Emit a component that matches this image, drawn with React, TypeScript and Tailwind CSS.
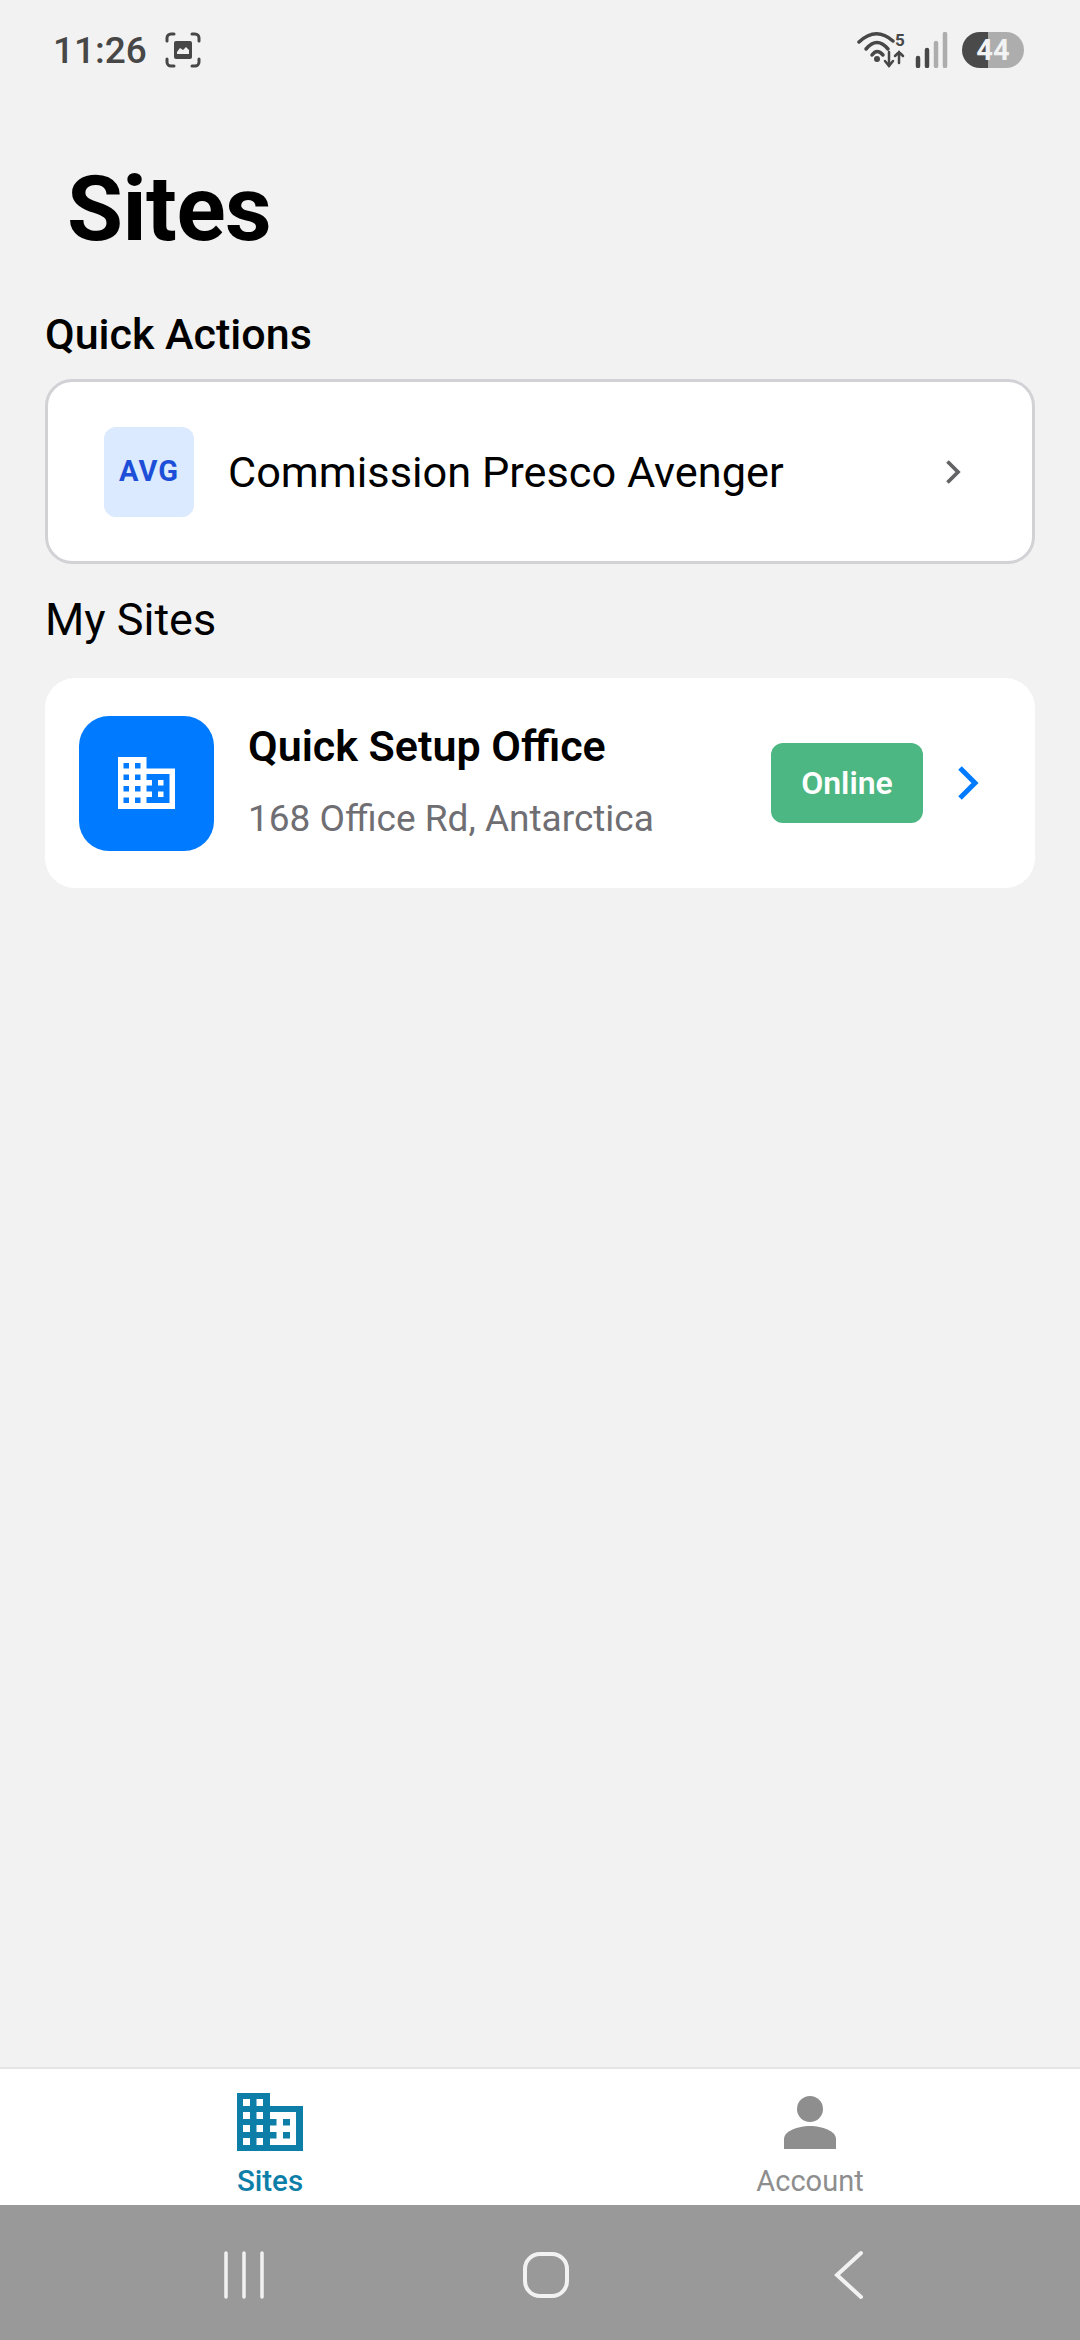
const roboto = "font-['Roboto','Liberation_Sans',sans-serif]";

function BuildingIcon({ className }: { className?: string }) {
  // two-block building, windows cut out of the left tower
  return (
    <svg viewBox="0 0 66 58" className={className} fill="currentColor" fillRule="evenodd">
      <path d="M0 0h33v13h33v45H0z M6 6v7h7V6z M19.500 6v7h6.500V6z M6 19v7h7v-7z M19.500 19v7h6.500v-7z M6 32v7h7v-7z M19.500 32v7h6.500v-7z M6 45v7h7v-7z M19.500 45v7h6.500v-7z M33 19v7h6.500v6.500H33V39h6.500v6.500H33V52h26V19z M46 26h7v6.500h-7z M46 39h7v6.500h-7z" />
    </svg>
  );
}

function OutlineBuilding({ className }: { className?: string }) {
  return (
    <svg viewBox="0 0 57 52" className={className} fill="currentColor" fillRule="evenodd">
      <path d="M0 0h28.500v11.500H57V52H0z M5.500 6v5.500H11V6z M17 6v5.500h5.500V6z M5.500 17.500V23H11v-5.500z M17 17.500V23h5.500v-5.500z M5.500 29v5.500H11V29z M17 29v5.500h5.500V29z M5.500 40.500V46H11v-5.500z M17 40.500V46h5.500v-5.500z M28.500 17v6H34v5.500h-5.500v6H34V40h-5.500v6H51.500V17z M40 23h5.500v5.500H40z M40 34.500h5.500V40H40z" />
    </svg>
  );
}

function StatusLeft() {
  return (
    <div className="flex items-center gap-[18px]">
      <span className={`${roboto} text-[37px] leading-none font-medium text-[#474747]`}>11:26</span>
      <svg viewBox="0 0 36 36" className="w-9 h-9" fill="none" stroke="#474747" strokeWidth="3" strokeLinecap="round">
        <path d="M2 9V6a4 4 0 0 1 4-4h3 M27 2h3a4 4 0 0 1 4 4v3 M34 27v3a4 4 0 0 1-4 4h-3 M9 34H6a4 4 0 0 1-4-4v-3" />
        <path d="M9 11a2 2 0 0 1 2-2h14a2 2 0 0 1 2 2v14a2 2 0 0 1-2 2H11a2 2 0 0 1-2-2z" fill="#474747" stroke="none" />
        <path d="M12 22v-2l3-4 3 2 3-3 3 3v4z" fill="#f2f2f2" stroke="none" />
      </svg>
    </div>
  );
}

function StatusRight() {
  return (
    <div className="flex items-center">
      <svg viewBox="0 0 54 38" className="w-[54px] h-[38px]" fill="none" stroke="#474747" strokeLinecap="round">
        <path d="M4 11Q21 -5 38 10" strokeWidth="3.500" />
        <path d="M11 18Q22 5 33 18" strokeWidth="3.500" />
        <path d="M17 24Q22 17 28 24" strokeWidth="3.500" />
        <circle cx="22" cy="28" r="3" fill="#474747" stroke="none" />
        <path d="M34 21v14 M30 30l4 5 4-5" strokeWidth="2.500" />
        <path d="M44 32V21 M40 25l4-4 4 4" strokeWidth="2.500" />
        <text x="40" y="15" fontSize="17" fontWeight="700" fill="#474747" stroke="none" fontFamily="Roboto">5</text>
      </svg>
      <svg viewBox="0 0 34 36" className="w-[34px] h-9 ml-[5px]" fill="none" strokeWidth="4.500" strokeLinecap="round">
        <path d="M4 34v-8 M13 34V18" stroke="#474747" />
        <path d="M22 34V11 M31 34V2" stroke="#adadad" />
      </svg>
      <div className={`${roboto} relative w-[62px] h-[36px] rounded-full overflow-hidden flex ml-[14px]`}>
        <div className="w-[26px] bg-[#4a4a4a]" />
        <div className="flex-1 bg-[#adadad]" />
        <span className="absolute inset-0 flex items-center justify-center text-[29px] font-bold text-[#f2f2f2] leading-none">44</span>
      </div>
    </div>
  );
}

export default function App() {
  return (
    <div className={`${roboto} flex flex-col h-[2340px] w-[1080px] bg-[#f2f2f2] overflow-hidden`}>
      <div className="flex items-center justify-between h-[100px] pl-[53px] pr-[56px]">
        <StatusLeft />
        <StatusRight />
      </div>

      <main className="flex-1 px-[45px]">
        <h1 className="text-[91px] leading-[100px] font-bold text-black pl-[22px] mt-[59px] tracking-[-0.5px]">Sites</h1>

        <h2 className="text-[43px] leading-[50px] font-medium text-black mt-[50px]">Quick Actions</h2>
        <button className="flex items-center w-[990px] h-[185px] mt-[20px] pl-[56px] pr-[62px] bg-white border-[3px] border-[#d1d1d6] rounded-[27px]">
          <span className="flex items-center justify-center w-[90px] h-[90px] rounded-[12px] bg-[#dbeafe] text-[#1d4ed8] text-[29px] font-bold tracking-[1px]">AVG</span>
          <span className="ml-[34px] mt-[4px] flex-1 text-left text-[43.300px] text-black">Commission Presco Avenger</span>
          <svg viewBox="0 0 24 24" className="w-9 h-9 text-[#636366]" fill="none" stroke="currentColor" strokeWidth="2.500">
            <path d="M9 5l7 7-7 7" />
          </svg>
        </button>

        <h2 className="text-[45px] leading-[50px] text-black mt-[31px]">My Sites</h2>
        <div className="flex items-center w-[990px] h-[210px] mt-[33px] pl-[34px] pr-[56px] bg-white rounded-[30px]">
          <div className="flex items-center justify-center w-[135px] h-[135px] rounded-[30px] bg-[#007aff] text-white">
            <OutlineBuilding className="w-[57px] h-[52px]" />
          </div>
          <div className="flex-1 ml-[34px] pb-[5px]">
            <p className="text-[43px] leading-[50px] font-semibold text-black">Quick Setup Office</p>
            <p className="text-[37px] leading-[44px] text-[#6e6e73] mt-[26px]">168 Office Rd, Antarctica</p>
          </div>
          <span className="flex items-center justify-center w-[152px] h-[80px] rounded-[12px] bg-[#4cb782] text-white text-[32px] font-semibold">Online</span>
          <svg viewBox="0 0 21 34" className="w-[21px] h-[34px] ml-[35px]" fill="none" stroke="#007aff" strokeWidth="5">
            <path d="M2 2l15 15L2 32" />
          </svg>
        </div>
      </main>

      <nav className="flex h-[138px] bg-white border-t-2 border-[#e5e5e5]">
        <div className="flex-1 flex flex-col items-center pt-[24px]">
          <BuildingIcon className="w-[66px] h-[58px] text-[#0d7ea8]" />
          <span className="text-[29.500px] leading-[34px] font-medium text-[#0d7ea8] mt-[13px]">Sites</span>
        </div>
        <div className="flex-1 flex flex-col items-center pt-[24px]">
          <svg viewBox="0 0 66 58" className="w-[66px] h-[58px] text-[#8e8e8e]" fill="currentColor">
            <circle cx="33" cy="16" r="13" />
            <path d="M7 56v-10c0-8 14-13 26-13s26 5 26 13v10z" />
          </svg>
          <span className="text-[29px] leading-[34px] text-[#8e8e8e] mt-[13px]">Account</span>
        </div>
      </nav>

      <div className="h-[135px] bg-[#999999]">
        <svg viewBox="0 0 1080 135" className="w-full h-full" fill="none" stroke="#f2f2f2" strokeLinecap="round">
          <path d="M226 48v44 M244 48v44 M262 48v44" strokeWidth="3.500" />
          <rect x="525" y="49" width="42" height="42" rx="15" strokeWidth="4" />
          <path d="M861 48L837 70l24 22" strokeWidth="4" />
        </svg>
      </div>
    </div>
  );
}
